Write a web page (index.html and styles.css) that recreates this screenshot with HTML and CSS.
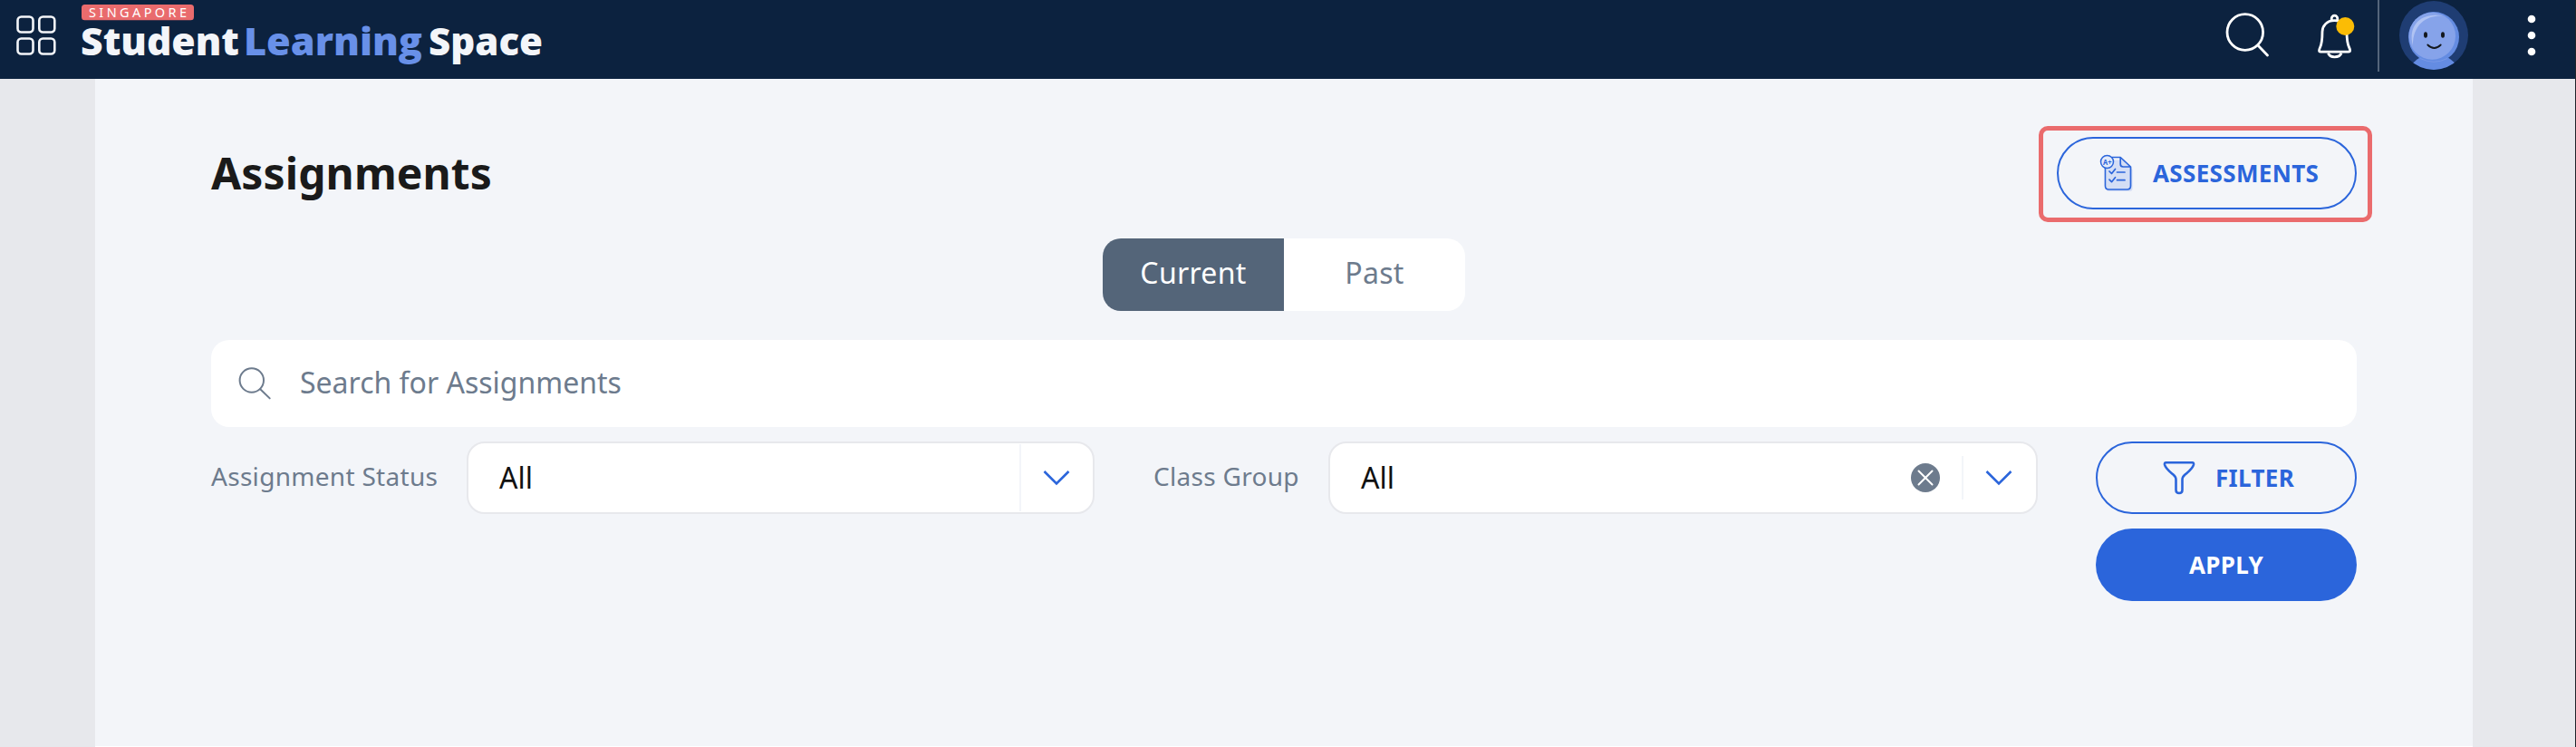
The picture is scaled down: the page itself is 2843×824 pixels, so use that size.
FILE: index.html
```html
<!DOCTYPE html>
<html lang="en">
<head>
<meta charset="utf-8">
<title>Assignments - Student Learning Space</title>
<link rel="stylesheet" href="styles.css">
</head>
<body>
<header class="topbar">
  <svg class="apps" width="44" height="44" viewBox="0 0 44 44" fill="none" stroke="#f3f5f9" stroke-width="2.6">
    <rect x="1.5" y="1.5" width="17" height="17" rx="4"/><rect x="25.3" y="1.5" width="17" height="17" rx="4"/>
    <rect x="1.5" y="25.5" width="17" height="17" rx="4"/><rect x="25.3" y="25.5" width="17" height="17" rx="4"/>
  </svg>
  <svg class="logo" width="512" height="87" viewBox="0 0 512 87">
    <rect x="0" y="5" width="124" height="17.3" rx="3.5" fill="#e96b6d"/>
    <text class="logo-tag" x="8" y="18.8" textLength="108">SINGAPORE</text>
    <text class="logo-word" x="-1" y="61" textLength="175" lengthAdjust="spacingAndGlyphs">Student</text>
    <text class="logo-word logo-blue" x="179" y="61" textLength="197" lengthAdjust="spacingAndGlyphs">Learning</text>
    <text class="logo-word" x="383" y="61" textLength="126" lengthAdjust="spacingAndGlyphs">Space</text>
  </svg>
  <div class="tools">
    <svg class="tool-search" width="50" height="50" viewBox="0 0 50 50" fill="none" stroke="#fff" stroke-width="2.8" stroke-linecap="round">
      <circle cx="21.8" cy="21.5" r="19.8"/><path d="M36 36l10.5 11"/>
    </svg>
    <svg class="bell" width="42" height="50" viewBox="0 0 42 50" fill="none" stroke="#fff" stroke-width="2.8" stroke-linejoin="round">
      <path d="M16.200 8V5.500a3.300 3.300 0 0 1 6.600 0V8M19.500 7.700C10.500 7.700 6 14 6 20C6 28 5.700 33 3.500 37.500C2 40.500 2.200 42.200 4 42.200H35C37 42.200 37.200 40.500 35.700 37.500C33.500 33 33 28 33 20C33 14 28.500 7.700 19.500 7.700Z"/>
      <path d="M12.500 43.500C13.500 46.700 16 47.800 19.500 47.800S26 46.700 27 43.500"/>
      <circle cx="31.300" cy="14" r="10" fill="#fbbc05" stroke="none"/>
    </svg>
    <span class="tool-divider"></span>
    <svg class="avatar" width="76" height="76" viewBox="0 0 76 76">
      <defs><clipPath id="disc"><circle cx="38" cy="38" r="38"/></clipPath></defs>
      <g clip-path="url(#disc)">
        <rect width="76" height="76" fill="#1f3d73"/>
        <path d="M10 74C15 68 19 65 23 62H53C58 65 62 69 66 74V80H10Z" fill="#648ce2"/>
        <circle cx="38" cy="40" r="28" fill="#648ce2"/>
        <ellipse cx="36.300" cy="38.700" rx="25.700" ry="26" fill="#86a3ea"/>
        <path d="M23 63.500Q38 71 53 63.500" fill="none" stroke="#7898e6" stroke-width="1"/>
        <path d="M15 49C9 27 24 12 48 16.500C31 15.500 15 25 15 49Z" fill="#b0c3f3"/>
        <ellipse cx="29" cy="37.500" rx="2" ry="3.300" fill="#14181d"/><ellipse cx="48" cy="37.500" rx="2" ry="3.300" fill="#14181d"/>
        <path d="M31.300 48.500Q38.500 55.500 45.700 48.500" fill="none" stroke="#14181d" stroke-width="1.800" stroke-linecap="round"/>
      </g>
    </svg>
    <svg class="more" width="10" height="46" viewBox="0 0 10 46" fill="#fff"><circle cx="5" cy="5" r="4.300"/><circle cx="5" cy="23" r="4.300"/><circle cx="5" cy="41" r="4.300"/></svg>
  </div>
</header>

<main class="panel">
  <div class="heading">
    <h1>Assignments</h1>
    <div class="highlight">
      <button class="btn btn-outline assessments">
        <svg width="38" height="42" viewBox="0 0 38 42" fill="none" stroke="#2b65db" stroke-width="1.700" stroke-linecap="round" stroke-linejoin="round">
          <path d="M11 6.500H26L36.500 17V38Q36.500 41 33.500 41H10Q8 41 8 39V10Z" fill="#d4def5" stroke="none"/>
          <path d="M14 3.500H23.200L34.500 14V35Q34.500 39 30.500 39H10.500Q6.500 39 6.500 35V14M23.200 3.500V11Q23.200 14 26.200 14H34.500"/>
          <circle cx="8.500" cy="8.500" r="7" fill="#e3eafa" stroke-width="1.500"/>
          <path d="M11 19l2.500 2.500 4-5M11 28.200l2.500 2.500 4-5M19.500 20H28M19.500 28.700H28"/>
          <text class="grade" x="4" y="11.500" textLength="9.500" lengthAdjust="spacingAndGlyphs">A+</text>
        </svg>
        <span>ASSESSMENTS</span>
      </button>
    </div>
  </div>

  <div class="tabs">
    <button class="tab tab-active">Current</button>
    <button class="tab">Past</button>
  </div>

  <label class="search">
    <svg width="36" height="36" viewBox="0 0 36 36" fill="none" stroke="#6d7b8d" stroke-width="2" stroke-linecap="round">
      <circle cx="14.800" cy="14.500" r="13.200"/><path d="M24.200 24.200l10.500 10.200"/>
    </svg>
    <span>Search for Assignments</span>
  </label>

  <div class="filters">
    <span class="label label-status">Assignment Status</span>
    <div class="select select-status">
      <span class="value">All</span>
      <span class="arrow"><svg width="30" height="18" viewBox="0 0 30 18" fill="none" stroke="#2b65db" stroke-width="2.600"><path d="M1.500 2L15 15.500L28.500 2"/></svg></span>
    </div>
    <span class="label label-group">Class Group</span>
    <div class="select select-group">
      <span class="value">All</span>
      <svg class="clear" width="32" height="32" viewBox="0 0 32 32"><circle cx="16" cy="16" r="16" fill="#6d7b8d"/><path d="M8.500 8.500l15 15M23.500 8.500l-15 15" stroke="#fff" stroke-width="2" stroke-linecap="round"/></svg>
      <span class="arrow arrow-short"><svg width="30" height="18" viewBox="0 0 30 18" fill="none" stroke="#2b65db" stroke-width="2.600"><path d="M1.500 2L15 15.500L28.500 2"/></svg></span>
    </div>
    <div class="actions">
      <button class="btn btn-outline filter">
        <svg width="36" height="38" viewBox="0 0 36 38" fill="none" stroke="#2b65db" stroke-width="2.600" stroke-linejoin="round"><path d="M3.500 2.200H32.500Q34.300 2.200 34 4.500C33 9 28 12.500 24.500 15.500Q21.500 18 21.500 21V32.500Q21.500 36 18 36T14.500 32.500V21Q14.500 18 11.500 15.500C8 12.500 3 9 2 4.500Q1.700 2.200 3.500 2.200Z"/></svg>
        <span>FILTER</span>
      </button>
      <button class="btn btn-solid">APPLY</button>
    </div>
  </div>
</main>
</body>
</html>
```

FILE: styles.css
```css
* { box-sizing: border-box; }

body {
  margin: 0;
  width: 2843px;
  height: 824px;
  overflow: hidden;
  background: #e7e8ec;
  border-right: 1px solid #1f2329;
  font-family: "Noto Sans", "Open Sans", sans-serif;
  color: #1a1a1a;
}

svg { display: block; flex: none; overflow: visible; }

.topbar {
  display: flex;
  height: 87px;
  padding-left: 18px;
  background: #0c223f;
}
.apps { margin-top: 17px; }
.logo { margin-left: 28px; }
.logo-tag { font-size: 14.5px; fill: #fff; }
.logo-word { font-family: "Open Sans", "Noto Sans", sans-serif; font-size: 43px; font-weight: 800; fill: #f3f5f9; }
.logo-blue { fill: #6890e8; }

.tools { display: flex; margin-left: auto; padding-right: 43px; }
.tool-search { margin-top: 14px; }
.bell { margin: 15px 25px 0 51px; }
.tool-divider { width: 2px; height: 79px; background: #54657b; }
.avatar { margin: 1px 65px 0 22px; }
.more { margin-top: 16px; }

.panel {
  width: 2624px;
  height: 736px;
  margin-left: 105px;
  padding: 52px 128px 0;
  background: #f3f5f9;
  box-shadow: 0 1px 0 #fff;
}

.heading { display: flex; justify-content: space-between; height: 106px; margin-right: -17px; }
h1 { margin: 0; font-size: 48px; line-height: 103px; font-weight: 700; letter-spacing: 0.1px; }
.highlight { height: 106px; padding: 7px 12px 0 15px; border: 5px solid #ea6b6d; border-radius: 10px; }

.btn {
  display: flex;
  align-items: center;
  justify-content: center;
  width: 288px;
  height: 80px;
  padding: 0;
  border: 0;
  border-radius: 40px;
  font: 700 26px "Noto Sans", "Open Sans", sans-serif;
  letter-spacing: 0.35px;
}
.btn-outline { border: 2px solid #2b65db; background: transparent; color: #2b65db; }
.btn-solid { background: #2b65db; color: #fff; }
.assessments { width: 331px; justify-content: flex-start; padding-left: 45px; gap: 21px; }
.grade { font-size: 8px; font-weight: 700; fill: #2b65db; stroke: none; letter-spacing: 0; }
.filter { justify-content: flex-start; padding-left: 72px; gap: 22px; }

.tabs { display: flex; width: 400px; height: 80px; margin: 18px 0 0 984px; border-radius: 20px; overflow: hidden; }
.tab {
  flex: 1;
  padding: 0 0 5px;
  border: 0;
  background: #fff;
  color: #6d7b8d;
  font: 400 32px "Noto Sans", "Open Sans", sans-serif;
  letter-spacing: 0.3px;
}
.tab-active { background: #546579; color: #fff; }

.search {
  display: flex;
  align-items: center;
  height: 96px;
  margin-top: 32px;
  padding-left: 30px;
  gap: 32px;
  background: #fff;
  border-radius: 20px;
  font-size: 32px;
  line-height: 44px;
  color: #6d7b8d;
}
.search span { padding-bottom: 3px; }

.filters { display: flex; align-items: flex-start; margin-top: 16px; }
.label { font-size: 28px; line-height: 77px; letter-spacing: 0.3px; color: #6d7b8d; white-space: nowrap; }
.label-status { width: 282px; }
.label-group { width: 193px; margin-left: 65px; }
.select {
  display: flex;
  align-items: center;
  height: 80px;
  padding-left: 34px;
  background: #fff;
  border: 2px solid #e7e8ec;
  border-radius: 20px;
}
.select-status { width: 693px; }
.select-group { width: 783px; }
.value { flex: 1; font-size: 32px; line-height: 74px; padding-bottom: 1px; color: #111; }
.clear { margin-right: 24px; }
.arrow { display: flex; align-items: center; height: 74px; width: 81px; padding-left: 24px; border-left: 2px solid #f3f5f9; }
.arrow-short { width: 82px; height: 48px; }
.actions { display: grid; gap: 16px; margin-left: auto; }
```
